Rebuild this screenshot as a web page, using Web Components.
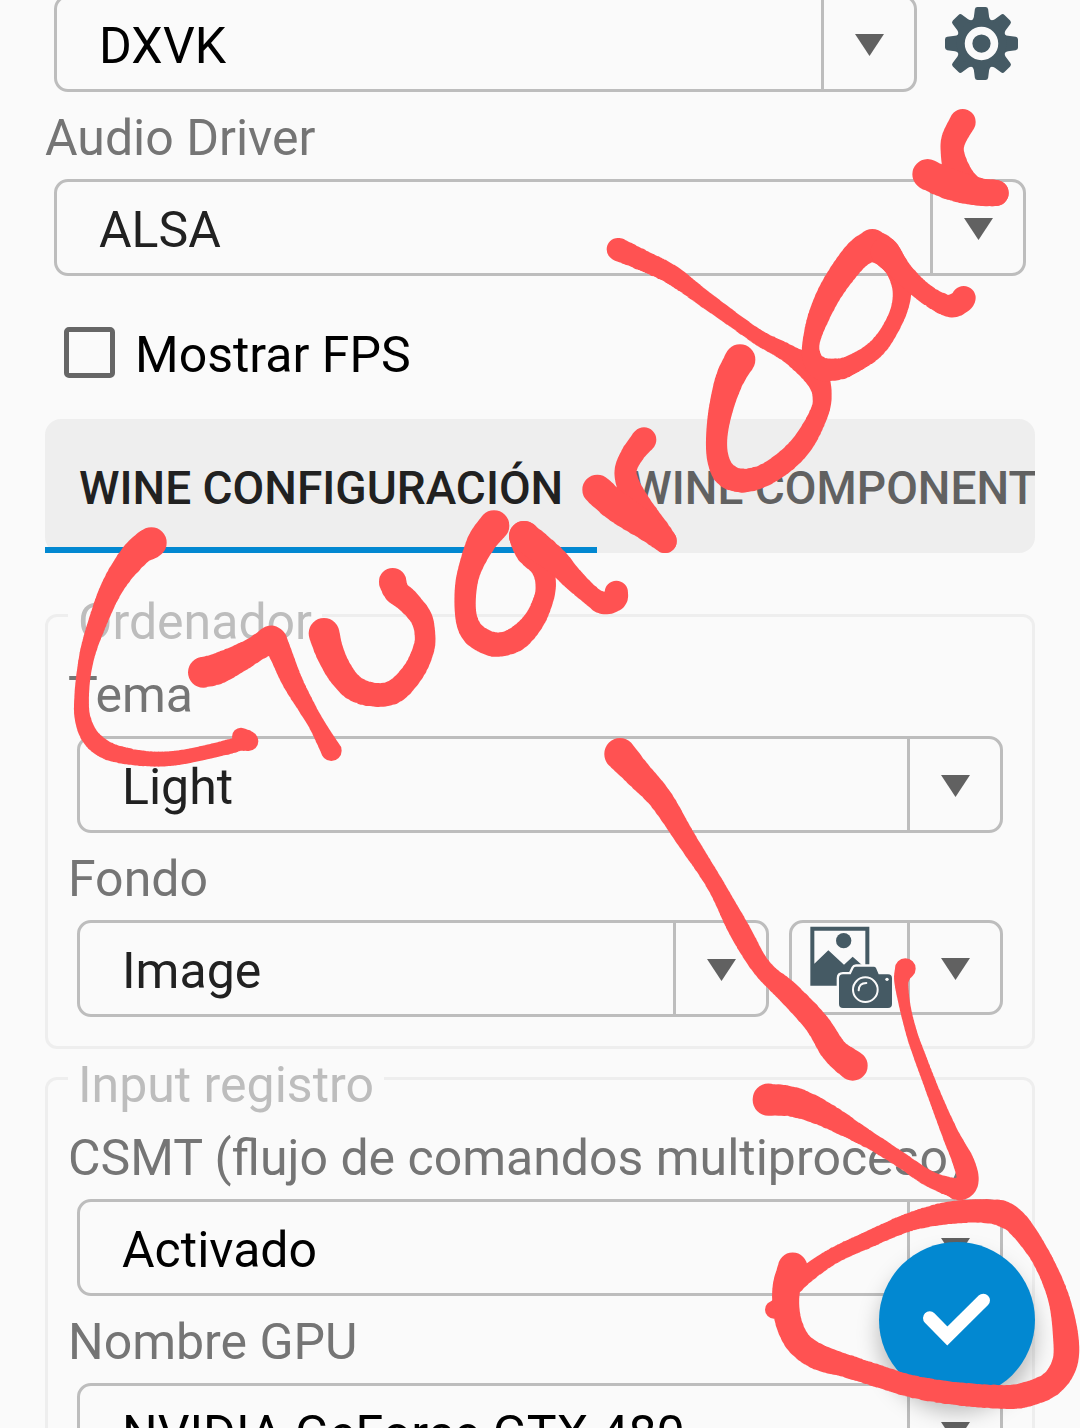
<!DOCTYPE html>
<html lang="es">
<head>
<meta charset="utf-8">
<meta name="viewport" content="width=device-width, initial-scale=1">
<title>Contenedor</title>
<style>
  html, body { margin: 0; height: 100%; background: #fafafa; }
  body { font-family: Roboto, "Liberation Sans", sans-serif; font-size: 50px; line-height: 58px; color: #212121; }
</style>
</head>
<body>
<settings-page>
  <select-field name="Wrapper" value="DXVK" tone="black">
    <icon-gear slot="after"></icon-gear>
  </select-field>
  <select-field label="Audio Driver" value="ALSA"></select-field>
  <check-field label="Mostrar FPS"></check-field>
  <tab-strip tabs="WINE CONFIGURACIÓN|WINE COMPONENT"></tab-strip>
  <field-group label="Ordenador">
    <select-field label="Tema" value="Light"></select-field>
    <select-field label="Fondo" value="Image">
      <image-picker slot="after"></image-picker>
    </select-field>
  </field-group>
  <field-group label="Input registro">
    <select-field label="CSMT (flujo de comandos multiproceso)" value="Activado" tone="black"></select-field>
    <select-field label="Nombre GPU" value="NVIDIA GeForce GTX 480" tone="black"></select-field>
  </field-group>
  <confirm-button slot="floating"></confirm-button>
  <ink-layer slot="floating"></ink-layer>
</settings-page>

<script>
const ARROW = '<svg class="arrow" viewBox="0 0 29 22" width="29" height="22" aria-hidden="true"><path d="M0 0H29L14.500 22Z" fill="#616161"/></svg>';

function define(name, render) {
  customElements.define(name, class extends HTMLElement {
    connectedCallback() {
      if (this.shadowRoot) return;
      this.attachShadow({ mode: 'open' }).innerHTML = '<style>*{box-sizing:border-box}</style>' + render(this);
    }
  });
}

define('settings-page', () => `
  <style>
    :host { display: block; position: relative; height: 100vh; overflow: hidden; }
    main { height: 100%; overflow: hidden; padding: 0 45px; }
    .content { margin-top: -5px; }
  </style>
  <main><div class="content"><slot></slot></div></main>
  <slot name="floating"></slot>`);

define('select-field', el => {
  const label = el.getAttribute('label');
  return `
  <style>
    :host { display: block; }
    label { display: block; padding: 17px 0 12px; color: #757575; white-space: nowrap; }
    .row { display: flex; gap: 20px; margin: 0 9px; align-items: flex-start; }
    .box { flex: 1; min-width: 0; display: grid; height: 97px; }
    select { grid-area: 1 / 1; appearance: none; width: 100%; height: 97px; margin: 0; padding: 4px 96px 0 42px;
      border: 3px solid #bdbdbd; border-radius: 14px; background: none; font: inherit;
      color: ${el.getAttribute('tone') === 'black' ? '#000' : '#212121'}; outline: none; }
    .cell { grid-area: 1 / 1; justify-self: end; width: 96px; margin: 3px 0; padding: 3px 3px 0 0;
      border-left: 3px solid #bdbdbd; display: grid; place-items: center; pointer-events: none; }
  </style>
  ${label ? `<label for="s">${label}</label>` : ''}
  <div class="row">
    <div class="box">
      <select id="s" ${label ? '' : `aria-label="${el.getAttribute('name')}"`}><option>${el.getAttribute('value')}</option></select>
      <div class="cell">${ARROW}</div>
    </div>
    <slot name="after"></slot>
  </div>`;
});

define('icon-gear', () => {
  const tooth = 'M-38 -64Q-25 -70 -23 -80L-20 -103Q-19 -110 -12 -110H12Q19 -110 20 -103L23 -80Q25 -70 38 -64Z';
  const teeth = [0, 45, 90, 135, 180, 225, 270, 315].map(a => `<path d="${tooth}" transform="rotate(${a})"/>`).join('');
  return `
  <style>
    :host { display: block; align-self: center; }
    button { display: block; margin: 0; padding: 0 8px; border: 0; background: none; }
    svg { display: block; }
  </style>
  <button aria-label="Ajustes"><svg viewBox="-110 -110 220 220" width="73" height="73" fill="#455a64">
    ${teeth}<circle r="75"/><circle r="39" fill="none" stroke="#fafafa" stroke-width="23"/>
  </svg></button>`;
});

define('image-picker', () => `
  <style>
    :host { display: block; }
    button { display: flex; justify-content: space-between; align-items: center; width: 214px; height: 95px; margin: 0;
      padding: 0 0 0 18px; border: 3px solid #bdbdbd; border-radius: 14px; background: none; }
    .cell { width: 93px; height: 100%; padding-top: 3px; border-left: 3px solid #bdbdbd; display: grid; place-items: center; }
  </style>
  <button aria-label="Elegir imagen">
    <svg viewBox="690 618 249 249" width="83" height="83" fill="#455a64">
      <path fill-rule="evenodd" d="M691 620H868V797H691ZM703 632V731L745 691L792 734L818 710L856 744V632Z"/>
      <circle cx="791" cy="662" r="23"/>
      <path d="M789 763H812L821 744Q823 740 828 740H881Q886 740 888 744L896 763H924Q936 763 936 775V852Q936 864 924 864H789Q777 864 777 852V775Q777 763 789 763Z" stroke="#fafafa" stroke-width="14" paint-order="stroke"/>
      <circle cx="856" cy="809" r="37" fill="none" stroke="#fafafa" stroke-width="6"/>
      <path d="M836 811Q837 789 859 789" fill="none" stroke="#fafafa" stroke-width="6" stroke-linecap="round"/>
      <circle cx="921" cy="778" r="5" fill="#fafafa"/>
    </svg>
    <span class="cell">${ARROW}</span>
  </button>`);

define('check-field', el => `
  <style>
    :host { display: block; padding: 50px 19px 35px; }
    label { display: flex; align-items: flex-start; gap: 20px; color: #000; }
    input { appearance: none; width: 51px; height: 51px; margin: 1px 0 0; border: 5px solid #666; border-radius: 5px; }
  </style>
  <label><input type="checkbox">${el.getAttribute('label')}</label>`);

define('tab-strip', el => `
  <style>
    :host { display: block; height: 134px; border-radius: 16px; background: #eee; }
    nav { display: flex; height: 100%; overflow: hidden; }
    button { flex: none; margin: 0; padding: 3px 34px 0; border: 0; background: none; font: 500 46px/54px Roboto, sans-serif;
      color: #616161; white-space: nowrap; }
    button[aria-selected=true] { color: #212121; box-shadow: inset 0 -6px #0288d1; }
  </style>
  <nav role="tablist">${el.getAttribute('tabs').split('|').map((t, i) =>
    `<button role="tab" aria-selected="${i === 0}">${t}</button>`).join('')}</nav>`);

define('field-group', el => `
  <style>
    :host { display: block; padding-top: 33px; }
    :host(:nth-of-type(2)) { padding-top: 0; }
    fieldset { margin: 0; min-width: 0; padding: 5px 20px 29px; border: 3px solid #eee; border-radius: 12px; }
    legend { padding: 14px 10px 0; line-height: 44px; color: #bdbdbd; }
  </style>
  <fieldset><legend>${el.getAttribute('label')}</legend><slot></slot></fieldset>`);

define('confirm-button', () => `
  <style>
    :host { display: block; position: absolute; right: 45px; bottom: 30px; }
    button { display: block; width: 156px; height: 156px; margin: 0; padding: 0; border: 0; border-radius: 50%;
      background: #0288d1; box-shadow: 0 14px 22px rgba(0,0,0,.26); }
    svg { display: block; }
  </style>
  <button aria-label="Guardar"><svg viewBox="417 575 468 468" width="156" height="156">
    <path d="M569 803L622 857L730 750" fill="none" stroke="#fff" stroke-width="40" stroke-linecap="round"/>
  </svg></button>`);

/* Freehand marker strokes: points are [x, y, radius] in thirds of a pixel, from the stroke's own origin. */
const STROKES = [
  [40, 500, [[334,128,46],[302,148,43],[270,182,40],[230,238,35],[195,308,31],[151,430,25],[133,510,22],[125,590,22],[128,655,24],[152,712,27],[200,751,27],[270,770,24],[340,777,22],[400,775,22],[460,765,22],[540,747,22],[600,731,22],[627,724,28],[603,710,27]]],
  [40, 500, [[490,517,46],[530,507,45],[580,484,42],[633,455,38],[670,432,38],[697,417,39],[716,448,35],[755,540,31],[799,620,26],[834,680,25],[874,752,31]]],
  [40, 500, [[852,400,46],[870,458,42],[902,520,39],[948,568,37],[1015,585,35],[1070,570,35],[1122,512,33],[1150,450,32],[1155,405,31],[1143,352,33],[1103,303,35],[1070,275,38],[1058,246,41]]],
  [380, 480, [[342,137,46],[305,185,43],[272,260,35],[258,320,33],[256,390,32],[267,440,34],[295,473,36],[350,494,36],[410,476,36],[461,423,32],[490,360,30],[497,310,31],[485,260,34],[450,210,45],[432,168,45]]],
  [380, 480, [[432,168,45],[480,205,43],[530,245,38],[575,293,33],[625,340,30],[662,367,32],[685,368,34],[706,355,36],[709,338,35]]],
  [560, 220, [[252,659,37],[218,702,34],[197,750,33],[206,798,35],[240,865,40],[290,930,38],[315,963,35]]],
  [560, 220, [[112,809,45],[160,852,45],[215,890,44],[260,920,41],[315,963,35]]],
  [560, 220, [[540,419,46],[508,480,42],[482,570,36],[470,655,32],[475,720,33],[499,765,36],[548,782,35],[612,766,33],[683,718,33],[735,660,32],[779,575,28],[786,525,29],[775,483,33],[740,440,34],[680,398,27],[600,355,23],[510,292,23],[430,234,25],[335,164,29],[250,122,31],[174,88,34]]],
  [560, 220, [[937,75,47],[888,108,42],[820,200,37],[776,290,32],[753,370,26],[758,420,30],[785,447,34],[815,449,33],[862,440,30],[948,386,27],[1005,300,25],[1026,220,28],[1010,145,34],[975,97,43],[937,75,47]]],
  [560, 220, [[975,95,43],[1028,158,32],[1090,216,29],[1148,252,31],[1180,257,34],[1205,243,36],[1211,234,36]]],
  [780, 0, [[548,366,39],[522,415,37],[517,455,35],[530,510,40],[560,560,44],[600,576,40],[647,579,39]]],
  [780, 0, [[442,523,45],[490,545,46],[540,562,45],[600,576,40],[647,579,39]]],
  [580, 720, [[120,102,47],[175,163,41],[242,237,36],[318,357,30],[405,493,26],[478,630,32],[545,742,29],[628,821,34],[710,910,37],[763,992,40],[818,1037,45]]],
  [740, 1050, [[496,-244,31],[486,-220,24],[485,-190,20],[497,-120,17],[515,-50,17],[532,0,18],[581,130,20],[630,250,25],[670,335,32],[683,390,33],[663,416,34],[620,407,27],[560,382,24],[480,328,23],[380,265,26],[250,191,37],[160,156,44],[85,149,47]]],
  [740, 1050, [[102,779,27],[130,770,32]]],
  [740, 1050, [[158,653,44],[140,710,42],[138,770,40],[150,830,39],[180,883,38],[236,921,38],[320,948,34],[420,980,33],[520,1010,33],[650,1031,34],[800,1041,35],[870,1030,37],[935,1000,37],[974,940,38],[977,860,38],[955,742,32],[905,625,30],[838,528,35],[790,492,38],[740,484,35],[680,484,34],[600,493,32],[500,519,27],[380,571,25],[280,618,24],[200,672,26],[160,710,26]]]
];

function strokePath(ox, oy, pts) {
  const mix = (a, b, c, d, t) => 0.5 * (2 * b + (c - a) * t + (2 * a - 5 * b + 4 * c - d) * t * t + (3 * b - a - 3 * c + d) * t * t * t);
  let d = '';
  for (let i = 0; i < pts.length - 1; i++) {
    const p0 = pts[Math.max(i - 1, 0)], p1 = pts[i], p2 = pts[i + 1], p3 = pts[Math.min(i + 2, pts.length - 1)];
    const n = Math.ceil(Math.hypot(p2[0] - p1[0], p2[1] - p1[1]) / 4);
    for (let k = 0; k <= n; k++) {
      const [x, y, r] = [0, 1, 2].map(j => mix(p0[j], p1[j], p2[j], p3[j], k / n) / 3);
      d += `M${(ox + x - r).toFixed(2)} ${(oy + y).toFixed(2)}a${r.toFixed(2)} ${r.toFixed(2)} 0 1 1 ${(2 * r).toFixed(2)} 0a${r.toFixed(2)} ${r.toFixed(2)} 0 1 1 ${(-2 * r).toFixed(2)} 0z`;
    }
  }
  return `<path d="${d}"/>`;
}

define('ink-layer', () => `
  <style>
    :host { display: block; position: absolute; inset: 0; pointer-events: none; }
    svg { display: block; width: 100%; }
  </style>
  <svg viewBox="0 0 1080 1428" fill="#ff5252" aria-hidden="true">${STROKES.map(s => strokePath(...s)).join('')}</svg>`);
</script>
</body>
</html>
